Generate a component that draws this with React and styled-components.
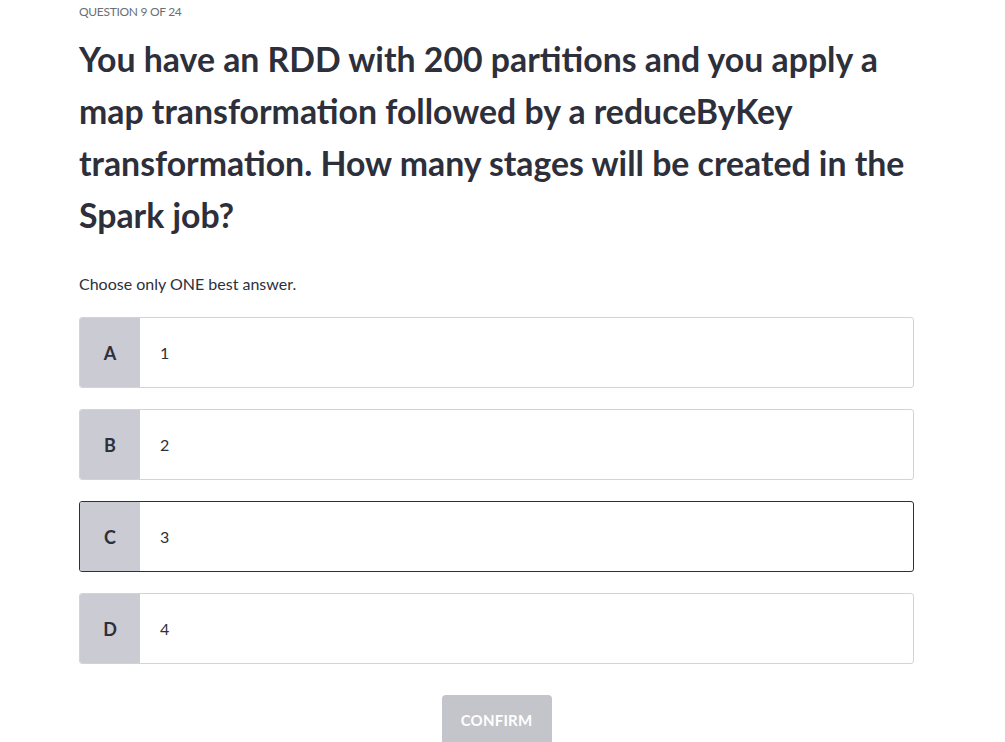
import styled, { createGlobalStyle } from "styled-components";

const Global = createGlobalStyle`
    body {
        margin: 0;
        background: #ffffff;
        font-family: Lato, "Open Sans", sans-serif;
        color: #2d2f3b;
    }
`;

const Page = styled.div`
    width: 835px;
    padding-left: 79px;
    padding-top: 2px;
`;

const Counter = styled.div`
    font-size: 12px;
    line-height: 20px;
    letter-spacing: -0.3px;
    color: #6a6f73;
    text-transform: uppercase;
`;

const Title = styled.h1`
    margin: 11px 0 0;
    font-size: 33.8px;
    line-height: 52px;
    font-weight: 700;
    color: #2d2f3b;
`;

const Hint = styled.p`
    margin: 32px 0 0;
    font-size: 16px;
    line-height: 22px;
    color: #2d2f3b;
`;

const Options = styled.div`
    display: flex;
    flex-direction: column;
    gap: 21px;
    margin-top: 22px;
`;

const Option = styled.div`
    display: flex;
    height: 71px;
    box-sizing: border-box;
    border: 1px solid ${(props) => (props.selected ? "#2d2f3b" : "#d1d2e0")};
    border-radius: 3px;
    overflow: hidden;
    background: #ffffff;
    cursor: pointer;
`;

const Letter = styled.div`
    width: 60px;
    flex-shrink: 0;
    display: flex;
    align-items: center;
    justify-content: center;
    background: #cacbd3;
    font-size: 18px;
    font-weight: 700;
    color: #2d2f3b;
`;

const Value = styled.div`
    display: flex;
    align-items: center;
    padding-left: 20px;
    font-size: 16px;
    color: #2d2f3b;
`;

const Footer = styled.div`
    display: flex;
    justify-content: center;
    margin-top: 31px;
`;

const Confirm = styled.button`
    width: 110px;
    height: 50px;
    border: none;
    border-radius: 4px;
    background: #c4c5cb;
    color: #ffffff;
    font-family: Lato, "Open Sans", sans-serif;
    font-size: 15px;
    font-weight: 700;
    letter-spacing: 0.2px;
`;

const answers = [
    { key: "A", text: "1" },
    { key: "B", text: "2" },
    { key: "C", text: "3" },
    { key: "D", text: "4" },
];

const App = () => {
    const selected = "C";

    return (
        <>
            <Global />
            <Page>
                <Counter>Question 9 of 24</Counter>
                <Title>
                    You have an RDD with 200 partitions and you apply a<br />
                    map transformation followed by a reduceByKey<br />
                    transformation. How many stages will be created in the<br />
                    Spark job?
                </Title>
                <Hint>Choose only ONE best answer.</Hint>
                <Options>
                    {answers.map((a) => (
                        <Option key={a.key} selected={a.key === selected}>
                            <Letter>{a.key}</Letter>
                            <Value>{a.text}</Value>
                        </Option>
                    ))}
                </Options>
                <Footer>
                    <Confirm disabled>CONFIRM</Confirm>
                </Footer>
            </Page>
        </>
    );
};

export default App;
